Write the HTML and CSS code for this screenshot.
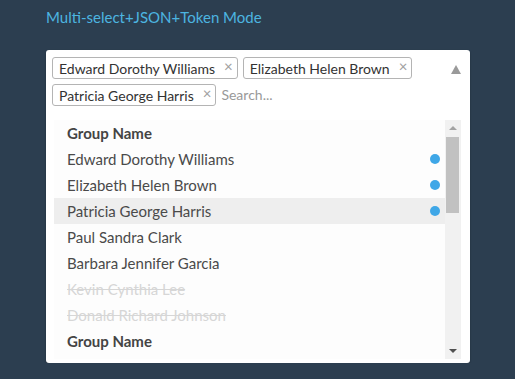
FILE: index.html
```html
<!DOCTYPE html>
<html>
<head>
<meta charset="utf-8">
<link rel="stylesheet" href="styles.css">
</head>
<body>
<div class="page">
  <div class="title">Multi-select+JSON+Token Mode</div>
  <div class="select">
    <div class="control">
      <div class="tokens">
        <span class="token">Edward Dorothy Williams<span class="x">×</span></span>
        <span class="token">Elizabeth Helen Brown<span class="x">×</span></span>
        <span class="token">Patricia George Harris<span class="x">×</span></span>
        <span class="search">Search...</span>
      </div>
      <div class="caret"></div>
    </div>
    <div class="dropdown">
      <div class="list">
        <div class="row group">Group Name</div>
        <div class="row">Edward Dorothy Williams<span class="dot"></span></div>
        <div class="row">Elizabeth Helen Brown<span class="dot"></span></div>
        <div class="row active">Patricia George Harris<span class="dot"></span></div>
        <div class="row">Paul Sandra Clark</div>
        <div class="row">Barbara Jennifer Garcia</div>
        <div class="row disabled">Kevin Cynthia Lee</div>
        <div class="row disabled">Donald Richard Johnson</div>
        <div class="row group">Group Name</div>
      </div>
      <div class="scrollbar">
        <div class="arrow up"></div>
        <div class="track"><div class="thumb"></div></div>
        <div class="arrow down"></div>
      </div>
    </div>
  </div>
</div>
</body>
</html>
```

FILE: styles.css
```css
html, body {
  margin: 0;
  padding: 0;
  background: #2c3e50;
  font-family: Lato, "Open Sans", sans-serif;
}
.page {
  padding: 9px 0 0 46px;
  width: 424px;
}
.title {
  font-size: 15px;
  line-height: 17px;
  color: #4cb5e0;
}
.select {
  margin-top: 24px;
  background: #fff;
  border-radius: 3px;
  height: 313px;
  box-shadow: 0 1px 2px rgba(0,0,0,0.3);
  display: flex;
  flex-direction: column;
  box-sizing: border-box;
  padding: 1px;
}
.control {
  display: flex;
  align-items: flex-start;
  padding: 6px 0 0 5px;
}
.tokens {
  flex: 1;
  display: flex;
  flex-wrap: wrap;
  gap: 5px;
  align-items: center;
}
.token {
  display: inline-flex;
  align-items: center;
  height: 22px;
  box-sizing: border-box;
  border: 1px solid #b4b4b4;
  border-radius: 3px;
  padding: 0 4px 0 6px;
  font-size: 14px;
  color: #333;
  white-space: nowrap;
}
.token .x {
  margin-left: 9px;
  color: #a0a0a0;
  font-size: 15px;
  position: relative;
  top: -2px;
}
.search {
  font-size: 14px;
  color: #999;
  height: 22px;
  line-height: 22px;
}
.caret {
  width: 10px;
  height: 0;
  margin: 8px 8px 0 20px;
  border-left: 5px solid transparent;
  border-right: 5px solid transparent;
  border-bottom: 9px solid #9a9a9a;
  box-sizing: border-box;
}
.dropdown {
  margin: 14px 8px 0 7px;
  height: 239px;
  display: flex;
  overflow: hidden;
}
.list {
  flex: 1;
  overflow: hidden;
  background: #fdfdfd;
}
.row {
  height: 26px;
  line-height: 26px;
  padding: 0 5px 0 13px;
  font-size: 15px;
  color: #4a4a4a;
  display: flex;
  align-items: center;
  justify-content: space-between;
  white-space: nowrap;
}
.row.group {
  font-weight: bold;
  color: #444;
}
.row.active {
  background: #eeeeee;
}
.row.disabled {
  color: #d6d6d6;
  text-decoration: line-through;
}
.dot {
  width: 10px;
  height: 10px;
  border-radius: 50%;
  background: #3fa7e7;
}
.scrollbar {
  width: 16px;
  background: #f1f1f1;
  display: flex;
  flex-direction: column;
}
.arrow {
  height: 17px;
  position: relative;
}
.arrow.up::after, .arrow.down::after {
  content: "";
  position: absolute;
  left: 4px;
  border-left: 4px solid transparent;
  border-right: 4px solid transparent;
}
.arrow.up::after {
  top: 6px;
  border-bottom: 4px solid #a3a3a3;
}
.arrow.down::after {
  top: 7px;
  border-top: 4px solid #505050;
}
.track {
  flex: 1;
  padding: 0 2px 0 1px;
}
.thumb {
  height: 76px;
  background: #c1c1c1;
}
```
